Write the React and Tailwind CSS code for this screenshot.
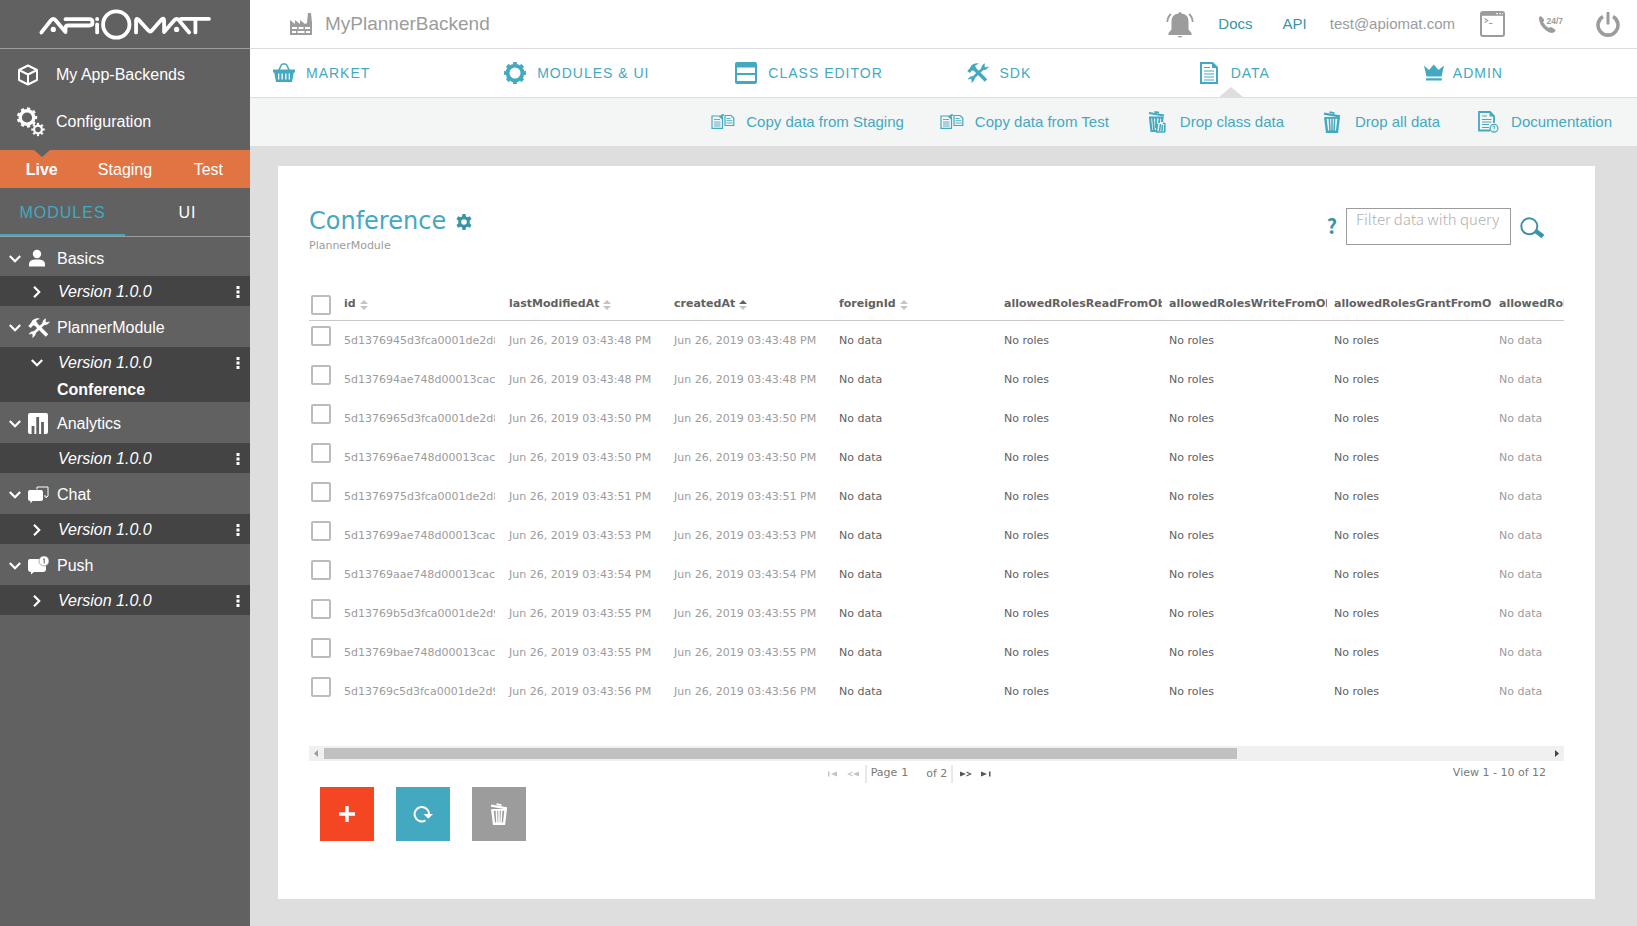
import { useState } from "react";
import clsx from "clsx";

const Logo = () => (
  <svg viewBox="114 26 524 94" className="w-[175px] h-[31px]" fill="none" stroke="#fff" strokeWidth="11.500" strokeLinecap="round" strokeLinejoin="round">
    <path d="M121 97 L150 60 Q157 52 164 60 L194 96 V84 Q194 76 202 76 H266 Q276 76 276 66 Q276 57 266 57 H194" />
    <circle cx="157" cy="88" r="8" fill="#fff" stroke="none" />
    <path d="M290 73 V97" />
    <path d="M290 56 V57" />
    <circle cx="348" cy="73" r="40" />
    <path d="M408 97 V61 Q409 52 416 59 L446 92 Q451 97 456 91 L486 57 Q493 52 493 61 V96 L524 60 Q531 53 538 60 L569 97" />
    <circle cx="531" cy="88" r="8" fill="#fff" stroke="none" />
    <path d="M544 56 H629" />
    <path d="M588 60 V97" />
  </svg>
);

const CubeIcon = () => (
  <svg viewBox="0 0 22 22" className="w-[22px] h-[22px]" fill="none" stroke="currentColor" strokeWidth="2" strokeLinejoin="round">
    <path d="M11 1.5 L20 6 V16 L11 20.5 L2 16 V6 Z M2 6 L11 10.5 L20 6 M11 10.5 V20.5" />
  </svg>
);

const GearRing = ({ cx, cy, r, width, teeth }) => (
  <g fill="none" stroke="currentColor">
    <circle cx={cx} cy={cy} r={r} strokeWidth={width} />
    <circle
      cx={cx}
      cy={cy}
      r={r + width / 2 + 0.6}
      strokeWidth="2.2"
      pathLength={teeth * 2}
      strokeDasharray="1 1"
      strokeDashoffset="0.5"
    />
  </g>
);

const GearsIcon = () => (
  <svg viewBox="0 0 28 30" className="w-7 h-[30px]">
    <GearRing cx={10} cy={10.5} r={6.8} width={3.4} teeth={9} />
    <GearRing cx={21} cy={22.5} r={3.9} width={2.2} teeth={8} />
  </svg>
);

const RingGearIcon = () => (
  <svg viewBox="0 0 22 22" className="w-[22px] h-[22px]">
    <GearRing cx={11} cy={11} r={7.4} width={3.8} teeth={8} />
  </svg>
);

const SolidGearIcon = () => (
  <svg viewBox="0 0 16 16" className="w-4 h-4" fill="currentColor" fillRule="evenodd">
    <path d="M6.5 0h3l.5 2.4 1.5.8 2.4-.9 1.6 2.6-1.8 1.7v2.8l1.8 1.7-1.6 2.6-2.4-.9-1.5.8-.5 2.4h-3L6 13.6l-1.5-.8-2.4.9L.5 11.100l1.800-1.700V6.600L.5 4.900l1.600-2.600 2.400.9L6 2.400zM8 5.200a2.800 2.800 0 1 0 0 5.600 2.800 2.800 0 0 0 0-5.600z" />
  </svg>
);

const FactoryIcon = () => (
  <svg viewBox="0 0 22 22" className="w-[22px] h-[22px]" fill="currentColor" fillRule="evenodd">
    <path d="M0 22V7l5 4V7l5 4V7l5 4 2-1 1-10h3l1 10v12zM2 14v2h5v-2zM8.500 14v2h5v-2zM15 14v2h5v-2zM2 18v2h4v-2zM7.500 18v2h7v-2zM16 18v2h4v-2z" />
  </svg>
);

const BasketIcon = () => (
  <svg viewBox="0 0 22 20" className="w-[22px] h-5">
    <path d="M5.500 8 L8 2.500 Q8.500 1 10 1 H12 Q13.500 1 14 2.500 L16.500 8" fill="none" stroke="currentColor" strokeWidth="1.600" />
    <path
      fill="currentColor"
      fillRule="evenodd"
      d="M0 6.500h22v3h-1.200L19 19H3L1.200 9.500H0zM5 10.500v6h1.300v-6zM8.500 10.500v6h1.300v-6zM12.200 10.500v6h1.300v-6zM15.700 10.500v6H17v-6z"
    />
  </svg>
);

const ClassIcon = () => (
  <svg viewBox="0 0 22 22" className="w-[22px] h-[22px]" fill="currentColor" fillRule="evenodd">
    <path d="M2 0h18a2 2 0 0 1 2 2v18a2 2 0 0 1-2 2H2a2 2 0 0 1-2-2V2a2 2 0 0 1 2-2zM2 5.500V11h18V5.500zM2 13v6h18v-6z" />
  </svg>
);

const ToolsIcon = () => (
  <svg viewBox="0 0 22 20" className="w-[22px] h-5" fill="none" stroke="currentColor">
    <path d="M7.500 6 L19 17.500" strokeWidth="3.600" />
    <path d="M0.300 8 L2.800 10 L5 7.500 H7 L9.500 5 L8 3 Q9.500 1.500 11.500 1 V.5 Q7.500 -.2 4.500 2.200 L3 5 Z" fill="currentColor" stroke="none" />
    <path d="M6 15 L16 5.500" strokeWidth="2.600" />
    <path d="M17.500 0.800 Q14 2.500 15 6.500 Q19 8 21.500 4 L18.500 4.500 L17.200 3.500 Z" fill="currentColor" stroke="currentColor" strokeWidth="0.600" />
    <path d="M4.700 19.500 Q8.200 17.500 7.200 13.800 Q3.200 12.500 1 16 L3.800 15.600 L5 16.700 Z" fill="currentColor" stroke="currentColor" strokeWidth="0.600" />
  </svg>
);

const DataIcon = () => (
  <svg viewBox="0 0 18 22" className="w-[18px] h-[22px]" fill="none" stroke="currentColor">
    <path d="M1 1 H12.500 L17 5.500 V21 H1 Z" strokeWidth="2" />
    <path d="M12 0 V6 H18 Z" fill="currentColor" stroke="none" />
    <path d="M4 5.500 H10 M4 9 H14 M4 12 H14 M4 15 H14 M4 18 H14" strokeWidth="1.200" />
  </svg>
);

const CrownIcon = () => (
  <svg viewBox="0 0 20 18" className="w-5 h-[18px]" fill="currentColor">
    <path d="M0 1.500 L5 6 L9.800 0.500 L14.500 6 L20 1.500 L17.500 12.500 H2.500 Z M2 14.300 H17.800 V16.600 H2 Z" />
  </svg>
);

const CopyIcon = () => (
  <svg viewBox="0 0 24 16" className="w-6 h-4" fill="none" stroke="currentColor">
    <path d="M1 2 H9 L11.500 4 V14.300 H1 Z" strokeWidth="1.200" />
    <path d="M3 5.500 H9 M3 8 H9.500 M3 10 H9.500 M3 12 H9.500" strokeWidth="0.900" />
    <path d="M14 1.500 H20 L22.800 4 V11.500 H14 Z" strokeWidth="1.200" />
    <path d="M15.500 4.500 H19.500 M15.500 6.700 H21.500 M15.500 9 H21.500" strokeWidth="0.900" />
    <path d="M9 3.500 Q10 1 13 0.800" strokeWidth="1.600" />
    <path d="M8 2.500 L12 2 L11 5.500 Z" fill="currentColor" stroke="none" />
  </svg>
);

const TrashIcon = () => (
  <svg viewBox="0 0 18 22" className="w-[18px] h-[22px]" fill="none" stroke="currentColor">
    <path d="M1 2.600 L17 5.300" strokeWidth="2.200" />
    <path d="M6.500 1.200 L11.500 2.100" strokeWidth="1.800" />
    <path d="M1.500 6.900 H16.500" strokeWidth="1.800" />
    <path d="M2.300 6.500 L4 20.800 H14 L15.700 6.500" strokeWidth="2.400" />
    <path d="M6.300 7 L7 20 M9 7 V20 M11.700 7 L11 20" strokeWidth="1.500" />
  </svg>
);

const TrashClassIcon = () => (
  <svg viewBox="0 0 18 22" className="w-[18px] h-[22px]" fill="none" stroke="currentColor">
    <path d="M1 2 L16 4.500" strokeWidth="2.200" />
    <path d="M6.500 .8 L11 1.600" strokeWidth="1.800" />
    <path d="M1 6.500 H15.500" strokeWidth="2" />
    <path d="M2 6.500 L3.500 20 H8 M14.500 6.500 L14 11" strokeWidth="2.200" />
    <path d="M5 7 L6 19 M8 7 V17 M11.500 7 L11 12" strokeWidth="1.800" />
    <path d="M8.500 21 L9.500 12.500 M11.500 20 L12.500 13 M14 20 L14.500 14 M8 21 H17 M16.800 13 V21 M15 12 L17.500 13" strokeWidth="1.600" />
  </svg>
);

const DocHelpIcon = () => (
  <svg viewBox="0 0 21 22" className="w-[21px] h-[22px]" fill="none" stroke="currentColor">
    <path d="M12 19.500 H1 V1 H12 L16 5 V12" strokeWidth="1.800" />
    <path d="M11.500 0 V5.500 H17 Z" fill="currentColor" stroke="none" />
    <path d="M4 5 H9 M4 8.500 H13.500 M4 11 H13.500 M4 13.500 H11 M4 16.500 H11" strokeWidth="1.200" />
    <circle cx="16" cy="17.200" r="3.900" strokeWidth="1.200" />
    <path d="M14.700 16.200 Q15 15 16.200 15.200 Q17.600 15.700 16.400 17 L16.100 18 M16.100 18.800 V19.600" strokeWidth="1" />
  </svg>
);

const BellIcon = () => (
  <svg viewBox="0 0 28 27" className="w-7 h-[27px]" fill="currentColor">
    <path d="M12.500 2.500 a1.500 1.500 0 0 1 3 0 Q22.500 3.500 22.500 10 V18.500 L25.500 22 V24 H2.500 V22 L5.500 18.500 V10 Q5.500 3.500 12.500 2.500 Z M11.500 25 H16.500 Q14 28 11.500 25 Z" />
    <path d="M5 3 Q1.500 6 1.300 11 M23 3 Q26.500 6 26.700 11" fill="none" stroke="currentColor" strokeWidth="1.800" />
  </svg>
);

const TerminalIcon = () => (
  <svg viewBox="0 0 25 26" className="w-[25px] h-[26px]" fill="none" stroke="currentColor">
    <rect x="1" y="1" width="23" height="24" rx="2" strokeWidth="2" />
    <path d="M1 3 H24" strokeWidth="3.600" />
    <path d="M16 2.700 H18 M19 2.700 H21 M22 2.700 H23" stroke="#fff" strokeWidth="1" />
    <path d="M4.500 7.500 L7.800 9.500 L4.500 11.500 M9 12.500 H12.500" strokeWidth="1.100" />
  </svg>
);

const HotlineIcon = () => (
  <svg viewBox="0 0 25 19" className="w-[25px] h-[19px]" fill="currentColor">
    <path d="M1 2.500 Q2.500 .5 4 2 L6 4.500 Q6.500 6 5 7 Q7 11 11 13 Q12.500 11.500 14 12.500 L17 14.500 Q18 16 16.500 17 Q13 19.500 8 15.500 Q.5 9.500 1 2.500 Z" />
    <text x="8.500" y="8.500" fontSize="8.500" fontWeight="700" fontFamily="Liberation Sans Narrow, Liberation Sans, sans-serif">24/7</text>
  </svg>
);

const PowerIcon = () => (
  <svg viewBox="0 0 24 25" className="w-6 h-[25px]" fill="none" stroke="currentColor">
    <path d="M7 4.500 A10 10 0 1 0 17 4.500" strokeWidth="3.600" />
    <path d="M12 0 V12.500" strokeWidth="3" />
  </svg>
);

const SearchIcon = () => (
  <svg viewBox="0 0 25 22" className="w-[25px] h-[22px]" fill="none" stroke="currentColor">
    <circle cx="9.300" cy="9.300" r="8" strokeWidth="2" />
    <path d="M15 13.500 L23 19.500" strokeWidth="4.600" />
  </svg>
);

const PlusIcon = () => (
  <svg viewBox="0 0 18 18" className="w-[18px] h-[18px]" stroke="currentColor" strokeWidth="3.400">
    <path d="M9 1 V17 M1 9 H17" />
  </svg>
);

const ReloadIcon = () => (
  <svg viewBox="0 0 20 18" className="w-5 h-[18px]" fill="none" stroke="currentColor">
    <path d="M12.500 15.400 A7.200 7.200 0 1 1 16 9.500" strokeWidth="2" />
    <path d="M10.500 9 H20 L15.300 13.800 Z" fill="currentColor" stroke="none" />
  </svg>
);

const UserIcon = () => (
  <svg viewBox="0 0 20 20" className="w-5 h-5" fill="currentColor">
    <circle cx="9" cy="5" r="4.200" />
    <path d="M1 17.500 V14.500 Q1.500 11 6.500 10.500 H11.500 Q16.500 11 17 14.500 V17.500 Z" />
  </svg>
);

const ChartIcon = () => (
  <svg viewBox="0 0 20 21" className="w-5 h-[21px]" fill="none">
    <rect width="20" height="21" rx="2" fill="currentColor" />
    <path d="M5 13 V21 M9.700 4 V21 M14.500 9 V21" stroke="#616161" strokeWidth="2.800" />
  </svg>
);

const ChatIcon = () => (
  <svg viewBox="0 0 21 18" className="w-[21px] h-[18px]" fill="none">
    <path d="M9 3.500 V1 H20 V10 L18 12 V10 H16" stroke="currentColor" strokeWidth="1" />
    <path d="M2 4 H13 Q15 4 15 6 V13 Q15 15 13 15 H4.500 L2.500 17.500 V15 Q0 15 0 13 V6 Q0 4 2 4 Z" fill="currentColor" />
  </svg>
);

const PushIcon = () => (
  <svg viewBox="0 0 21 19" className="w-[21px] h-[19px]">
    <path d="M2 3 H15 Q18 3 18 6 V13 Q18 16 15 16 H6 L3 18.500 V16 Q0 16 0 13 V5 Q0 3 2 3 Z" fill="currentColor" />
    <circle cx="16" cy="5" r="5" fill="currentColor" stroke="#8a8a8a" strokeWidth="0.700" />
    <path d="M15 3.500 L16.200 2.800 V7.500" fill="none" stroke="#616161" strokeWidth="1" />
  </svg>
);

const Chevron = ({ open }) => (
  <svg viewBox="0 0 12 12" className={clsx("w-3 h-3", !open && "-rotate-90")} fill="none" stroke="currentColor" strokeWidth="2.200">
    <path d="M0.800 3 L6 8.200 L11.200 3" />
  </svg>
);

const DotsIcon = () => (
  <svg viewBox="0 0 4 13" className="w-1 h-[13px]" fill="currentColor">
    <path d="M.5 0h3v3h-3zM.5 4.500h3v3h-3zM.5 9h3v3h-3z" />
  </svg>
);

const SortIcon = ({ active }) => (
  <svg viewBox="0 0 8 10" className="w-2 h-[10px] shrink-0">
    <path d="M0 4 L4 0 L8 4 Z" fill={active ? "#616161" : "#c4c4c4"} />
    <path d="M0 6 L4 10 L8 6 Z" fill="#c4c4c4" />
  </svg>
);

const modules = [
  { name: "Basics", icon: UserIcon, state: "closed" },
  { name: "PlannerModule", icon: ToolsIcon, state: "open", classes: ["Conference"] },
  { name: "Analytics", icon: ChartIcon, state: "none" },
  { name: "Chat", icon: ChatIcon, state: "closed" },
  { name: "Push", icon: PushIcon, state: "closed" },
];

const navItems = [
  { name: "MARKET", icon: BasketIcon },
  { name: "MODULES & UI", icon: RingGearIcon },
  { name: "CLASS EDITOR", icon: ClassIcon },
  { name: "SDK", icon: ToolsIcon },
  { name: "DATA", icon: DataIcon, active: true },
  { name: "ADMIN", icon: CrownIcon },
];

const actions = [
  { name: "Copy data from Staging", icon: CopyIcon },
  { name: "Copy data from Test", icon: CopyIcon },
  { name: "Drop class data", icon: TrashClassIcon },
  { name: "Drop all data", icon: TrashIcon },
  { name: "Documentation", icon: DocHelpIcon },
];

const columns = [
  { key: "id", sort: true },
  { key: "lastModifiedAt", sort: true },
  { key: "createdAt", sort: true, active: true },
  { key: "foreignId", sort: true },
  { key: "allowedRolesReadFromObject" },
  { key: "allowedRolesWriteFromObject" },
  { key: "allowedRolesGrantFromObject" },
  { key: "allowedRolesCreate" },
];

const rows = [
  { id: "5d1376945d3fca0001de2d8e", time: "03:43:48" },
  { id: "5d137694ae748d00013cac7a", time: "03:43:48" },
  { id: "5d1376965d3fca0001de2d8f", time: "03:43:50" },
  { id: "5d137696ae748d00013cac7b", time: "03:43:50" },
  { id: "5d1376975d3fca0001de2d8a", time: "03:43:51" },
  { id: "5d137699ae748d00013cac8a", time: "03:43:53" },
  { id: "5d13769aae748d00013cac8b", time: "03:43:54" },
  { id: "5d13769b5d3fca0001de2d90", time: "03:43:55" },
  { id: "5d13769bae748d00013cac8c", time: "03:43:55" },
  { id: "5d13769c5d3fca0001de2d91", time: "03:43:56" },
];

const Sidebar = () => {
  const [tab, setTab] = useState("MODULES");

  return (
    <aside className="w-[250px] shrink-0 bg-[#616161] text-white text-base">
      <div className="h-[49px] border-b border-[#9d9d9d] flex items-center justify-center">
        <Logo />
      </div>

      <nav className="pt-[2px]">
        <a href="#backends" className="flex items-center h-[47px] pl-[17px]">
          <span className="w-[39px]"><CubeIcon /></span>
          My App-Backends
        </a>
        <a href="#configuration" className="flex items-center h-[47px] pl-[17px]">
          <span className="w-[39px]"><GearsIcon /></span>
          Configuration
        </a>
      </nav>

      <div className="relative mt-[5px] grid grid-cols-3 h-[38px] pt-[2px] bg-[#e07443]">
        <svg viewBox="0 0 16 7" className="absolute top-0 left-[34px] w-4 h-[7px]" fill="#616161">
          <path d="M0 0 H16 L8 7 Z" />
        </svg>
        <button className="font-bold">Live</button>
        <button>Staging</button>
        <button>Test</button>
      </div>

      <div className="grid grid-cols-2 h-[49px] border-b border-[#9d9d9d]">
        {["MODULES", "UI"].map((name) => (
          <button
            key={name}
            onClick={() => setTab(name)}
            className={clsx(
              "pt-1 border-b-2 tracking-[1px]",
              tab === name ? "border-[#43a9c0] text-[#43a9c0]" : "border-transparent"
            )}
          >
            {name}
          </button>
        ))}
      </div>

      <ul>
        {modules.map(({ name, icon: Icon, state, classes }) => (
          <li key={name} className="group">
            <button className="flex items-center w-full h-[41px] pt-[2px] group-first:h-[39px] group-first:pt-1 pl-[9px]">
              <Chevron open />
              <span className="w-[36px] pl-[7px]"><Icon /></span>
              {name}
            </button>
            <div className="bg-[#444444]">
              <div className="flex items-center h-[30px] pt-[2px] pl-[31px] pr-[10px]">
                <span className="w-[27px]">{state !== "none" && <Chevron open={state === "open"} />}</span>
                <a href="#version" className="flex-1 italic">Version 1.0.0</a>
                <button aria-label={`${name} menu`}><DotsIcon /></button>
              </div>
              {classes?.map((item) => (
                <a key={item} href="#class" className="block h-[25px] pl-[57px] font-bold leading-[26px]">{item}</a>
              ))}
            </div>
          </li>
        ))}
      </ul>
    </aside>
  );
};

const Header = () => (
  <header className="bg-white">
    <div className="flex items-center h-[49px] border-b border-[#dedede] pl-10 pr-[17px] text-[15px] text-[#9c9c9c]">
      <FactoryIcon />
      <h1 className="ml-[13px] text-[19px]">MyPlannerBackend</h1>
      <div className="ml-auto flex items-center">
        <button aria-label="Notifications"><BellIcon /></button>
        <a href="#docs" className="ml-6 text-[#3994a8]">Docs</a>
        <a href="#api" className="ml-[30px] text-[#3994a8]">API</a>
        <span className="ml-[23px]">test@apiomat.com</span>
        <button aria-label="Console" className="ml-[25px]"><TerminalIcon /></button>
        <button aria-label="Support" className="ml-[33px]"><HotlineIcon /></button>
        <button aria-label="Log out" className="ml-[33px]"><PowerIcon /></button>
      </div>
    </div>

    <nav className="grid grid-cols-6 h-[49px] border-b border-[#dedede] text-sm tracking-[1px] text-[#43a9c0]">
      {navItems.map(({ name, icon: Icon, active }) => (
        <a key={name} href="#nav" className="relative flex items-center gap-[9px] pl-[21px] last:pl-[15px] last:gap-[6px]">
          <span className="flex justify-center w-[26px]"><Icon /></span>
          {name}
          {active && (
            <svg viewBox="0 0 24 10" className="absolute bottom-0 left-[44px] w-6 h-[10px]" fill="#dedede">
              <path d="M0 10 L12 0 L24 10 Z" />
            </svg>
          )}
        </a>
      ))}
    </nav>

    <div className="flex items-center justify-end gap-9 h-12 pr-[25px] bg-[#f4f6f6] text-[15px] text-[#43a9c0]">
      {actions.map(({ name, icon: Icon }) => (
        <button key={name} className="flex items-center gap-[11px]">
          <span className="flex justify-center w-6"><Icon /></span>
          {name}
        </button>
      ))}
    </div>
  </header>
);

const Check = ({ label }) => (
  <input
    type="checkbox"
    aria-label={label}
    className="block appearance-none w-5 h-5 ml-[2px] border-2 border-[#bcbcbc] rounded-xs bg-white checked:bg-[#43a9c0]"
  />
);

const DataTable = () => (
  <div className="overflow-hidden">
    <table className="table-fixed border-separate border-spacing-0 w-[1348px] text-[11px] text-left text-[#9c9c9c]">
      <colgroup>
        <col className="w-7" />
        {columns.map((col) => <col key={col.key} className="w-[165px]" />)}
      </colgroup>
      <thead>
        <tr className="h-9 text-[#616161]">
          <th className="p-0 pt-[10px] align-top border-b border-[#c8c8c8]"><Check label="Select all rows" /></th>
          {columns.map((col) => (
            <th key={col.key} className="p-0 pt-1 pl-[7px] font-bold border-b border-[#c8c8c8]">
              <div className="flex items-center gap-1 overflow-hidden">
                {col.key}
                {col.sort && <SortIcon active={col.active} />}
              </div>
            </th>
          ))}
        </tr>
      </thead>
      <tbody>
        {rows.map((row) => (
          <tr key={row.id} className="h-[39px]">
            <td className="p-0 pt-[5px] align-top"><Check label={`Select ${row.id}`} /></td>
            <td className="px-[7px] pt-[2px]"><div className="overflow-hidden">{row.id}</div></td>
            <td className="px-[7px] pt-[2px] whitespace-nowrap">Jun 26, 2019 {row.time} PM</td>
            <td className="px-[7px] pt-[2px] whitespace-nowrap">Jun 26, 2019 {row.time} PM</td>
            <td className="px-[7px] pt-[2px] text-[#616161]">No data</td>
            <td className="px-[7px] pt-[2px] text-[#616161]">No roles</td>
            <td className="px-[7px] pt-[2px] text-[#616161]">No roles</td>
            <td className="px-[7px] pt-[2px] text-[#616161]">No roles</td>
            <td className="px-[7px] pt-[2px]">No data</td>
          </tr>
        ))}
      </tbody>
    </table>
  </div>
);

const ScrollBar = () => (
  <div className="flex items-center h-[15px] mt-[35px] bg-[#f0f0f0]">
    <svg viewBox="0 0 15 15" className="w-[15px] h-[15px]" fill="#9c9c9c"><path d="M9 4 V11 L5 7.500 Z" /></svg>
    <div className="flex-1">
      <div className="w-[74.5%] h-[11px] bg-[#c0c0c0]" />
    </div>
    <svg viewBox="0 0 15 15" className="w-[15px] h-[15px]" fill="#444444"><path d="M6 4 V11 L10 7.500 Z" /></svg>
  </div>
);

const Pager = () => (
  <div className="grid grid-cols-[1fr_auto_1fr] items-center h-6 pt-px text-[11px] text-[#7a7a7a]">
    <div />
    <div className="flex items-center mr-[54px]">
      <button aria-label="First page" className="mr-[9px]">
        <svg viewBox="0 0 10 6" className="w-[10px] h-[6px]" fill="#c4c4c4"><path d="M0 0.500h1.500v5H0zM9 .5v5L3 3z" /></svg>
      </button>
      <button aria-label="Previous page" className="mr-[6px]">
        <svg viewBox="0 0 12 6" className="w-3 h-[6px]" fill="#c4c4c4"><path d="M12 .5v5L6 3zM5.500 .5v1.200L2.500 3l3 1.300v1.200L0 3z" /></svg>
      </button>
      <label className="flex items-center h-[18px] border-l-2 border-[#e8e8e8] pl-1">
        Page
        <input defaultValue="1" className="w-[25px] ml-1" />
      </label>
      <span className="h-[18px] leading-[18px] pr-1 border-r-2 border-[#e8e8e8]">of 2</span>
      <button aria-label="Next page" className="ml-[7px] mr-[9px]">
        <svg viewBox="0 0 12 6" className="w-3 h-[6px]" fill="#555"><path d="M0 .5v5L6 3zM6.500 .5v1.200L9.500 3l-3 1.300v1.200L12 3z" /></svg>
      </button>
      <button aria-label="Last page">
        <svg viewBox="0 0 10 6" className="w-[10px] h-[6px]" fill="#555"><path d="M8 0.500h1.500v5H8zM0 .5v5L6 3z" /></svg>
      </button>
    </div>
    <div className="pr-[18px] text-right">View 1 - 10 of 12</div>
  </div>
);

export default function App() {
  return (
    <div className="flex min-h-screen bg-[#dedede] font-['Liberation_Sans',Arial,sans-serif]">
      <Sidebar />

      <div className="flex flex-col flex-1 min-w-0">
        <Header />

        <main className="flex-1 mt-5 ml-7 mr-[42px] mb-[27px] px-[31px] bg-white font-['DejaVu_Sans',Verdana,sans-serif]">
          <div className="flex items-start justify-between h-[119px] pt-10">
            <div>
              <div className="flex items-center gap-[10px] h-7 text-[#43a9c0]">
                <h2 className="pt-px text-2xl leading-7">Conference</h2>
                <button aria-label="Class settings" className="pt-1 text-[#3994a8]"><SolidGearIcon /></button>
              </div>
              <p className="mt-1 text-[11px] text-[#9c9c9c]">PlannerModule</p>
            </div>

            <div className="flex items-center pt-[2px] pr-[19px] text-[#3994a8]">
              <button className="mr-[9px] pb-[2px] text-xl leading-5 font-bold font-['Noto_Sans_CJK_SC',sans-serif]">?</button>
              <textarea
                aria-label="Filter data with query"
                placeholder="Filter data with query"
                className="w-[165px] h-[37px] px-[9px] border border-[#9c9c9c] resize-none overflow-hidden text-[15px] leading-5 font-light font-['Noto_Sans_CJK_SC',sans-serif] placeholder:text-[#b0b0b0]"
              />
              <button aria-label="Search" className="ml-[9px] pt-[2px]"><SearchIcon /></button>
            </div>
          </div>

          <DataTable />
          <ScrollBar />
          <Pager />

          <div className="flex gap-[22px] mt-[2px] ml-[11px]">
            <button aria-label="Add" className="flex items-center justify-center w-[54px] h-[54px] bg-[#f54623] text-white"><PlusIcon /></button>
            <button aria-label="Reload" className="flex items-center justify-center w-[54px] h-[54px] bg-[#43a9c0] text-white"><ReloadIcon /></button>
            <button aria-label="Delete" className="flex items-center justify-center w-[54px] h-[54px] bg-[#9c9c9c] text-white"><TrashIcon /></button>
          </div>
        </main>
      </div>
    </div>
  );
}
